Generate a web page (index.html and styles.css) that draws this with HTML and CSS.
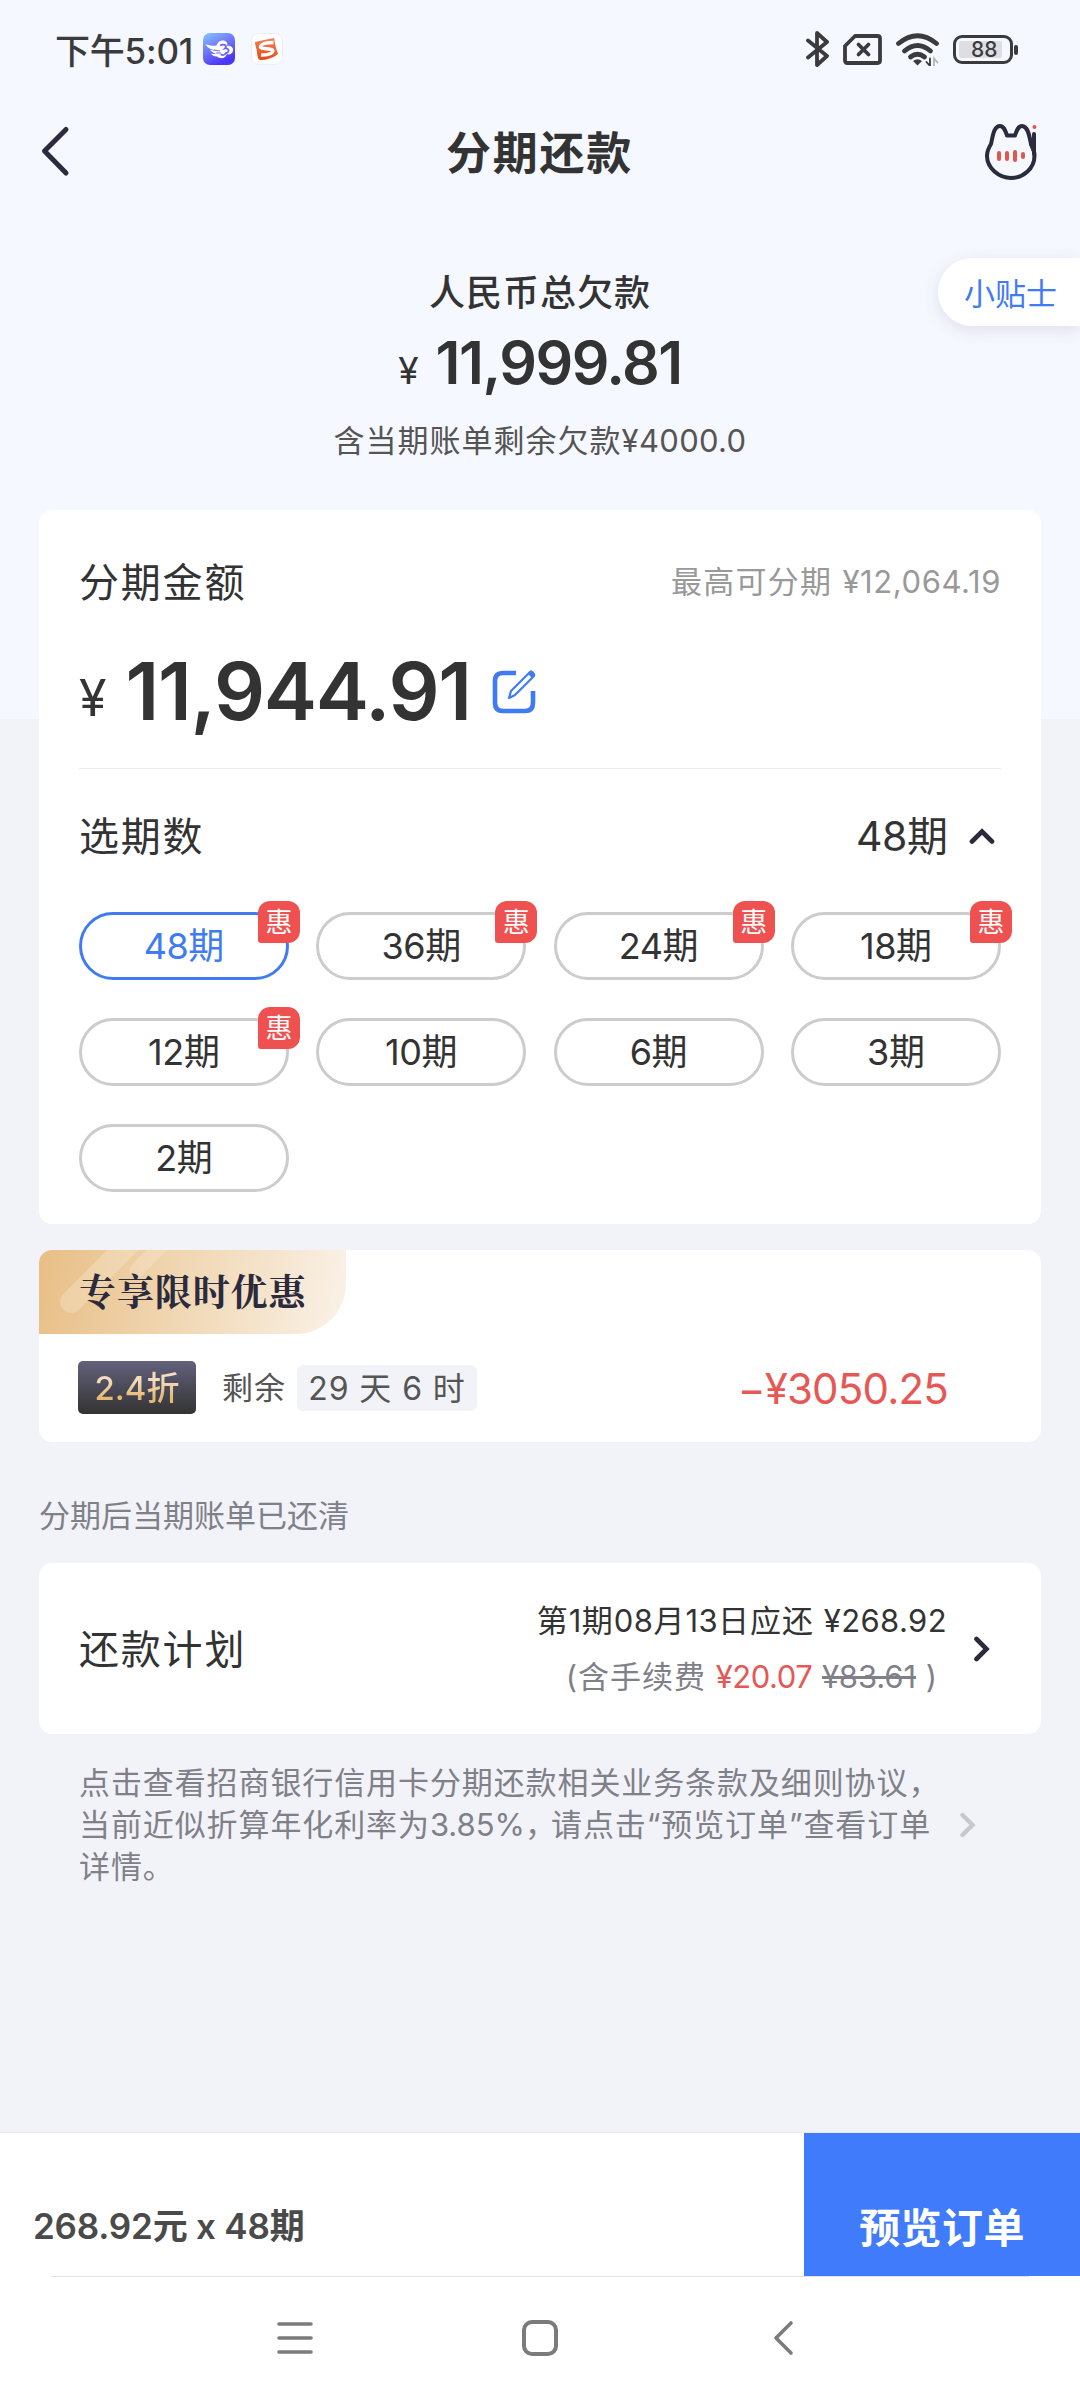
FILE: index.html
```html
<!DOCTYPE html>
<html lang="zh-CN">
<head>
<meta charset="utf-8">
<title>分期还款</title>
<link rel="stylesheet" href="styles.css">
</head>
<body>
<div class="status">
  <span class="clock">下午5:01</span>
  <svg class="app-icon" width="32" height="32" viewBox="0 0 32 32">
    <defs><linearGradient id="sky" x1="0" y1="0" x2=".5" y2="1"><stop offset="0" stop-color="#86c8ff"/><stop offset=".5" stop-color="#7078fa"/><stop offset="1" stop-color="#4a34f8"/></linearGradient></defs>
    <rect width="32" height="32" rx="7" fill="url(#sky)"/>
    <path d="M2.500 11.500c4 .5 7 2 11 1 1-4 6-7 10-3.500 1 1 1 3 .5 4 3-1 7 1.500 6 5-.7 3-4 4-6 3-2 5-7 5-10 2.500-3 0-5-1-6-3 2 .7 4 .5 5 0-3-.5-5-2-6-4 2 1 4 1.500 6 1-4-1-8-2-10.500-6z" fill="#fff"/>
    <path d="M17 12.500c4-2 8 0 5 3 4-1 5 4 1 4.500-1 2-4 3-5 1" fill="none" stroke="#6a66fa" stroke-width="1.800"/>
    <path d="M11 17l6 1M13 20l5 0" stroke="#6a66fa" stroke-width="1"/>
  </svg>
  <svg class="app-icon" width="32" height="32" viewBox="0 0 32 32">
    <defs><linearGradient id="fire" x1="0" y1="0" x2="0" y2="1"><stop offset="0" stop-color="#f58058"/><stop offset="1" stop-color="#e94a10"/></linearGradient></defs>
    <rect x=".5" y=".5" width="31" height="31" rx="7" fill="#fff" stroke="#eceef2"/>
    <path d="M4 9c6-1 12-3 19-4 1 4 1 8 4 16-5 4-12 6-17 6-3 0-3-2-4-7C6 15 4 13 4 9z" fill="url(#fire)"/>
    <path d="M22.500 9.500c-5 0-12 1-13 4s10 1.500 12 3.500-3 5.500-11.500 5" fill="none" stroke="#fff" stroke-width="3.400"/>
  </svg>
  <div class="status-right">
    <svg width="23" height="36" viewBox="0 0 23 36" fill="none" stroke="#3b3b3d" stroke-width="3.800" stroke-linecap="round" stroke-linejoin="round"><path d="M2 9.500 21 25 11 34V2l10 9L2 26.500"/></svg>
    <svg width="39" height="31" viewBox="0 0 39 31" fill="none" stroke="#3b3b3d" stroke-linejoin="round"><path d="M12 2h22.500q2.500 0 2.500 2.500v22q0 2.500-2.500 2.500h-30Q2 29 2 26.500V12z" stroke-width="3.800"/><path d="M15.500 10.500l10 10M25.500 10.500l-10 10" stroke-width="3.800" stroke-linecap="round"/></svg>
    <svg width="43" height="33" viewBox="0 0 43 33" fill="none" stroke="#3b3b3d" stroke-width="4.800" stroke-linecap="round"><path d="M2.500 10.500Q21.500-5 40.500 10.500"/><path d="M8.500 18q13-11 26 0"/><path d="M14.500 24q7-5.500 14 0"/><path d="M17 28q4.500-3.500 9 0L21.500 32.500z" fill="#3b3b3d" stroke="none"/><path d="M34 25.500V33l-3.500-4" stroke-width="1.800"/><path d="M38 33v-7.500l3.500 4" stroke="#b3b5ba" stroke-width="1.800"/></svg>
    <div class="battery"><span class="battery-level">88</span></div>
  </div>
</div>
<header class="navbar">
  <svg class="back" width="30" height="52" viewBox="0 0 30 52" fill="none" stroke="#2c2b3d" stroke-width="5" stroke-linecap="round" stroke-linejoin="round"><path d="M26 4.500 4.500 26 26 48"/></svg>
  <h1>分期还款</h1>
  <svg class="cat" width="56" height="58" viewBox="0 0 56 58" fill="none" stroke="#2c2b3d" stroke-width="4" stroke-linecap="round" stroke-linejoin="round">
    <path d="M8 21C10 12 11 3 17 3c4 0 5.500 5 7 9.500h8C33.500 8 35 3 39 3c6 0 7.500 10 9 18 2 4 3.500 7 3.500 11.500C51.500 46 40 55 28 55S4 45 4 33c0-5 1.500-8 4-12z"/>
    <path d="M51 11v20M48 21l3 7"/>
    <path d="M16 30v6M24 30v6M32 29v8M40 31v3" stroke="#e25650"/>
    <circle cx="51.500" cy="4" r="2" fill="#e25650" stroke="none"/>
  </svg>
</header>
<main>
  <section class="debt">
    <p class="debt-label">人民币总欠款</p>
    <p class="debt-amount"><span class="yen">¥</span><span class="value">11,999.81</span></p>
    <p class="debt-note">含当期账单剩余欠款<span class="num">¥4000.0</span></p>
    <a class="tips">小贴士</a>
  </section>

  <section class="card amount-card">
    <div class="row">
      <h2>分期金额</h2>
      <span class="max">最高可分期 <span class="num">¥12,064.19</span></span>
    </div>
    <div class="amount">
      <span class="yen">¥</span><span class="value">11,944.91</span>
      <svg class="edit" width="44" height="44" viewBox="0 0 44 44" fill="none" stroke="#417bf3"><path d="M24 3H11Q3 3 3 11v22q0 8 8 8h22q8 0 8-8V21" stroke-width="4.600"/><path d="M17 28l2-7L37.500 2.500q1.500-1.500 3.500.5t.5 3.500L23 25z" stroke-width="2.200" stroke-linejoin="round"/><path d="M36 4l4 4 2-2.500q1-2-1-4t-3-.5z" fill="#417bf3" stroke="none"/></svg>
    </div>
    <div class="row term-row">
      <h2>选期数</h2>
      <span class="term"><span class="num">48</span>期
        <svg width="26" height="17" viewBox="0 0 26 17" fill="none" stroke="#2c2b3d" stroke-width="4.600" stroke-linecap="round"><path d="M3 13.500l10-10 10 10"/></svg>
      </span>
    </div>
    <div class="terms">
      <button class="pill selected"><span class="num">48</span>期<i class="badge">惠</i></button>
      <button class="pill"><span class="num">36</span>期<i class="badge">惠</i></button>
      <button class="pill"><span class="num">24</span>期<i class="badge">惠</i></button>
      <button class="pill"><span class="num">18</span>期<i class="badge">惠</i></button>
      <button class="pill"><span class="num">12</span>期<i class="badge">惠</i></button>
      <button class="pill"><span class="num">10</span>期</button>
      <button class="pill"><span class="num">6</span>期</button>
      <button class="pill"><span class="num">3</span>期</button>
      <button class="pill"><span class="num">2</span>期</button>
    </div>
  </section>

  <section class="card offer">
    <div class="ribbon">
      <svg class="streaks" width="307" height="84" viewBox="0 0 307 84" stroke="#f8e6cc" stroke-linecap="round" opacity=".4"><path d="M32 52L90-6" stroke-width="22"/><path d="M98 20l30-30" stroke-width="15"/></svg>
      <span class="ribbon-text">专享限时优惠</span>
    </div>
    <div class="offer-row">
      <span class="discount"><span class="gold">2.4折</span></span>
      <span class="left">剩余</span>
      <span class="countdown">29 天 6 时</span>
      <span class="saving">−¥3050.25</span>
    </div>
  </section>

  <p class="cleared">分期后当期账单已还清</p>

  <section class="card plan">
    <h2>还款计划</h2>
    <div class="plan-detail">
      <p class="first">第<span class="num">1</span>期<span class="num">08</span>月<span class="num">13</span>日应还 <span class="num">¥268.92</span></p>
      <p class="fee"><span>(含手续费</span> <span class="num red">¥20.07</span> <s class="num">¥83.61</s> )</p>
    </div>
    <svg width="17" height="26" viewBox="0 0 17 26" fill="none" stroke="#2c2b3d" stroke-width="4.600" stroke-linecap="round"><path d="M3.500 3l10 10-10 10"/></svg>
  </section>

  <section class="terms-note">
    <p>点击查看招商银行信用卡分期还款相关业务条款及细则协议，<br>当前近似折算年化利率为<span class="num">3.85%</span><span class="comma">，</span>请点击“预览订单”查看订单<br>详情。</p>
    <svg width="17" height="26" viewBox="0 0 17 26" fill="none" stroke="#c8c7cc" stroke-width="4.400" stroke-linecap="round"><path d="M3.500 3l10 10-10 10"/></svg>
  </section>
</main>
<footer class="order">
  <span class="total">268.92元 x 48期</span>
  <button class="preview">预览订单</button>
</footer>
<nav class="system">
  <svg width="36" height="36" viewBox="0 0 36 36" stroke="#7b7b7b" stroke-width="3.600" stroke-linecap="round"><path d="M2 4h32M2 18h32M2 32h32"/></svg>
  <svg width="38" height="38" viewBox="0 0 38 38" fill="none" stroke="#7b7b7b" stroke-width="4"><rect x="3" y="3" width="32" height="32" rx="8"/></svg>
  <svg width="22" height="36" viewBox="0 0 22 36" fill="none" stroke="#7b7b7b" stroke-width="3.600" stroke-linecap="round" stroke-linejoin="round"><path d="M19 3 4 18l15 15"/></svg>
</nav>
</body>
</html>
```

FILE: styles.css
```css
* { box-sizing: border-box; margin: 0; padding: 0; }
body {
  width: 1080px;
  height: 2400px;
  display: flex;
  flex-direction: column;
  overflow: hidden;
  font-family: Inter, "Noto Sans CJK SC", sans-serif;
  color: #333;
  background: linear-gradient(#f5f8ff 719px, #f2f3f8 719px);
}
button { font-family: inherit; border: 0; background: none; color: inherit; }
h1, h2, i { font-style: normal; }
svg { display: block; flex: none; }

.status { display: flex; align-items: center; height: 98px; padding: 0 61px 0 55px; color: #3b3b3d; }
.clock { width: 148px; font-size: 35px; font-weight: 500; letter-spacing: -.2px; line-height: 44px; padding-top: 4px; white-space: nowrap; }
.app-icon + .app-icon { margin-left: 16px; }
.status-right { display: flex; align-items: center; margin-left: auto; }
.status-right svg + svg { margin-left: 14px; }
.battery { position: relative; width: 60px; height: 29px; margin-left: 14px; margin-right: 6px; padding: 3px; border: 3px solid #3b3b3d; border-radius: 9px; }
.battery::after { content: ""; position: absolute; left: 58px; top: 7px; width: 4px; height: 10px; border-radius: 2px; background: #3b3b3d; }
.battery-level { display: block; width: 43px; height: 17px; padding-left: 12px; background: #dcdee3; border-radius: 2px; font-size: 21px; font-weight: 500; line-height: 17px; }

.navbar { display: flex; align-items: center; justify-content: space-between; height: 109px; padding: 0 41px 0 40px; }
.navbar h1 { font-size: 45px; font-weight: 600; letter-spacing: 1.700px; line-height: 56px; padding: 2px 0 0 26px; }
.back { margin-bottom: 3px; }
.cat { margin-bottom: 1px; }

.debt { position: relative; height: 303px; padding-top: 64px; text-align: center; }
.debt-label { font-size: 36px; font-weight: 500; letter-spacing: 1px; line-height: 44px; }
.debt-amount { display: flex; justify-content: center; align-items: baseline; height: 66px; margin-top: 15px; line-height: 66px; }
.debt-amount .yen { font-size: 37px; margin-right: 17px; }
.debt-amount .value { font-size: 59px; font-weight: 600; letter-spacing: -1.500px; }
.debt-note { margin-top: 25px; font-size: 31px; letter-spacing: 1px; line-height: 40px; color: #555; }
.debt-note .num { letter-spacing: .3px; }
.tips { position: absolute; right: 0; top: 51px; width: 142px; height: 68px; padding-left: 26px; border-radius: 34px 0 0 34px; background: #fff; box-shadow: 0 4px 16px rgba(60, 70, 100, .13); color: #417bf3; font-size: 31px; line-height: 71px; text-align: left; }

.card { width: 1002px; margin: 0 auto; background: #fff; border-radius: 13px; }
.card h2 { font-size: 40px; font-weight: 400; letter-spacing: 1.800px; line-height: 56px; padding-top: 2px; }
.amount-card { height: 714px; padding: 44px 40px 32px; }
.row { display: flex; align-items: center; justify-content: space-between; height: 56px; }
.max { font-size: 31px; letter-spacing: 1.300px; line-height: 50px; padding-bottom: 1px; color: #999; }
.max .num { letter-spacing: .6px; }
.amount { display: flex; align-items: baseline; height: 123px; margin-top: 36px; line-height: 90px; border-bottom: 1px solid #ececee; }
.amount .yen { font-size: 50px; margin-right: 19px; transform: translateY(-4px); }
.amount .value { font-size: 80px; font-weight: 600; letter-spacing: -1.300px; }
.edit { align-self: flex-start; margin: 24px 0 0 21px; }
.term-row { margin-top: 39px; }
.term { display: flex; align-items: center; font-size: 41px; line-height: 56px; padding-right: 6px; }
.term .num { letter-spacing: -.4px; }
.term svg { margin-left: 21px; }

.terms { display: grid; grid-template-columns: repeat(4, 210px); justify-content: space-between; row-gap: 38px; margin-top: 48px; }
.pill { position: relative; height: 68px; border: 3px solid #ccc; border-radius: 34px; font-size: 36px; line-height: 63px; }
.pill .num { letter-spacing: -.4px; }
.selected { border-color: #417bf3; color: #417bf3; }
.badge { position: absolute; right: -14px; top: -14px; width: 42px; height: 42px; border-radius: 12px 12px 12px 3px; background: #ef5151; color: #fff; font-size: 27px; line-height: 43px; }

.offer { height: 192px; margin-top: 26px; overflow: hidden; }
.ribbon { position: relative; width: 307px; height: 84px; padding-left: 40px; border-bottom-right-radius: 50px; background: linear-gradient(100deg, #e8be85, #f1d9b7 50%, #faf2e8); overflow: hidden; line-height: 81px; }
.streaks { position: absolute; left: 0; top: 0; }
.ribbon-text { position: relative; font-family: "Noto Serif CJK SC", "Noto Sans CJK SC", serif; font-size: 37px; font-weight: 700; letter-spacing: .9px; color: #2c2b3d; }
.offer-row { display: flex; align-items: center; height: 53px; margin: 27px 93px 0 39px; line-height: 48px; }
.discount { width: 118px; height: 53px; border-radius: 5px; text-align: center; font-size: 33px; font-weight: 500; line-height: 55px; background: linear-gradient(#63617c, #333); }
.gold { background: linear-gradient(#f3dcc0 30%, #e5b873 75%); -webkit-background-clip: text; background-clip: text; color: transparent; }
.left { margin-left: 26px; font-size: 31px; letter-spacing: 1px; color: #555; }
.countdown { width: 180px; height: 46px; margin-left: 11px; border-radius: 6px; background: #f2f3f8; text-align: center; font-size: 32px; letter-spacing: .9px; line-height: 47px; color: #555; white-space: nowrap; }
.saving { margin-left: auto; padding-top: 2px; font-size: 42px; letter-spacing: -.8px; color: #e65855; }

.cleared { margin: 54px 0 27px 39px; font-size: 31px; line-height: 40px; color: #808089; }

.plan { display: flex; align-items: center; height: 171px; padding: 0 51px 0 40px; }
.plan-detail { margin: 0 26px 0 auto; padding-top: 1px; text-align: right; font-size: 31px; letter-spacing: 1px; line-height: 56px; white-space: nowrap; }
.first .num { letter-spacing: .4px; }
.fee { padding-right: 9px; color: #808089; }
.fee .num { letter-spacing: -.5px; }
.fee s.num { letter-spacing: -.1px; }
.red { color: #e65855; }

.terms-note { display: flex; align-items: center; margin: 28px 104px 0 79px; }
.terms-note p { width: 870px; font-size: 31px; letter-spacing: .9px; line-height: 42px; color: #808089; white-space: nowrap; }
.terms-note .num { letter-spacing: 0; }
.terms-note .comma { letter-spacing: -5px; }
.terms-note svg { margin-left: auto; }

.order { display: flex; height: 143px; margin-top: auto; background: #fff; box-shadow: 0 -1px #e8eaee; }
.total { padding: 71px 0 0 33px; font-size: 35px; font-weight: 600; letter-spacing: -.2px; line-height: 44px; color: #4a4a4a; }
.preview { width: 276px; margin-left: auto; padding-top: 40px; background: #3f7bfa; color: #fff; font-size: 41px; font-weight: 600; letter-spacing: .4px; }
.system { display: flex; align-items: center; height: 124px; padding-left: 277px; background: linear-gradient(#e2e2e2, #e2e2e2) 51px 0 / 978px 1px no-repeat, #fff; }
.system svg:nth-child(2) { margin-left: 208px; }
.system svg:nth-child(3) { margin-left: 213px; }
```
